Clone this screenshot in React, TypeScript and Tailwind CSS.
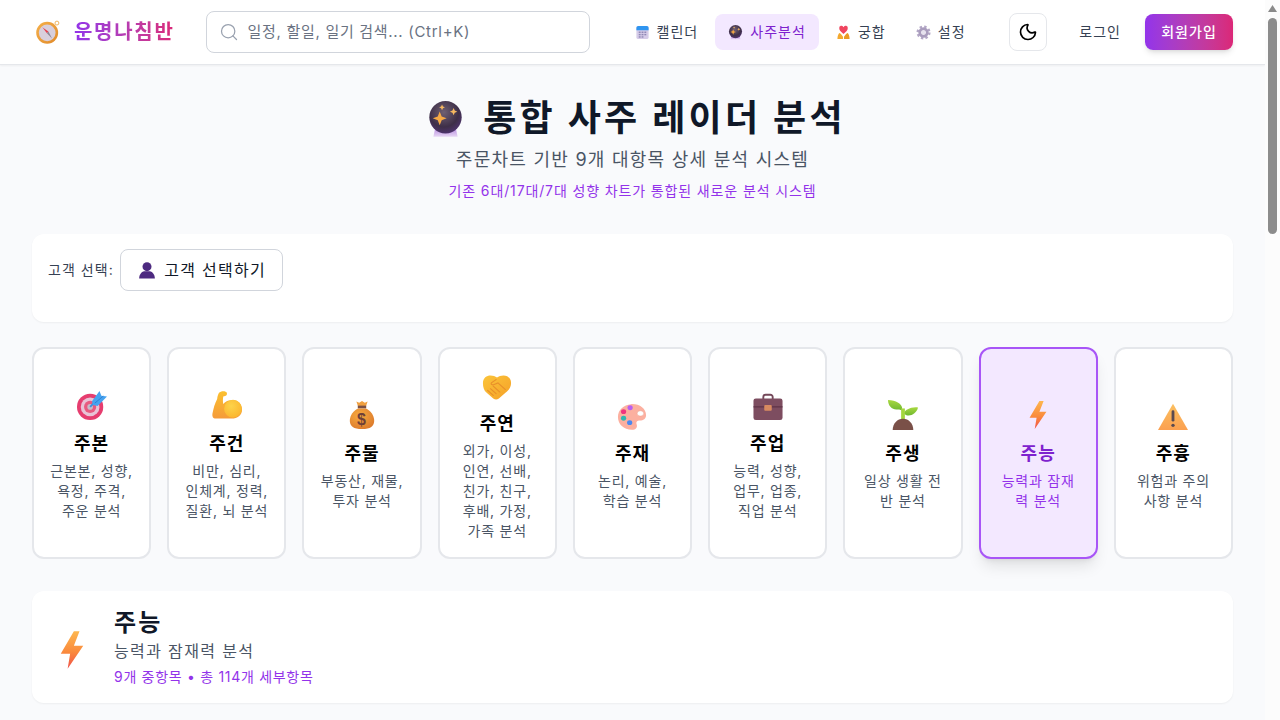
import { Moon, Search } from 'lucide-react'

type IconProps = { className?: string }

function CompassIcon({ className }: IconProps) {
  return (
    <svg viewBox="0 0 32 32" className={className}>
      <defs>
        <linearGradient id="cmp" x1="0" y1="0" x2="1" y2="1">
          <stop offset="0" stopColor="#f5b04a" />
          <stop offset="1" stopColor="#e08a2a" />
        </linearGradient>
      </defs>
      <circle cx="27" cy="5" r="2.4" fill="none" stroke="#eeb25c" strokeWidth="1.2" />
      <circle cx="15" cy="17" r="13.5" fill="url(#cmp)" />
      <circle cx="15" cy="17" r="10.3" fill="#d8cfdc" />
      <path d="M9 10l7.5 5.5-1.8 2z" fill="#e5404f" />
      <path d="M21 24l-6.3-6.5 1.8-2z" fill="#8b8494" />
    </svg>
  )
}

function CalendarIcon({ className }: IconProps) {
  return (
    <svg viewBox="0 0 32 32" className={className}>
      <rect x="3" y="2" width="26" height="28" rx="4" fill="#d5cbe8" />
      <path d="M3 11V6a4 4 0 014-4h18a4 4 0 014 4v5z" fill="#2f95f0" />
      <g fill="#8f88b5">
        <rect x="8" y="14" width="4" height="3" />
        <rect x="14" y="14" width="4" height="3" />
        <rect x="20" y="14" width="4" height="3" />
        <rect x="8" y="19" width="4" height="3" />
        <rect x="14" y="19" width="4" height="3" />
        <rect x="20" y="19" width="4" height="3" />
        <rect x="8" y="24" width="4" height="3" />
        <rect x="14" y="24" width="4" height="3" />
      </g>
    </svg>
  )
}

function CrystalBallIcon({ className, id }: IconProps & { id: string }) {
  return (
    <svg viewBox="0 0 32 32" className={className}>
      <defs>
        <radialGradient id={id} cx="0.45" cy="0.35" r="0.75">
          <stop offset="0" stopColor="#6f6072" />
          <stop offset="0.6" stopColor="#3e2f48" />
          <stop offset="1" stopColor="#54357c" />
        </radialGradient>
        <linearGradient id={`${id}b`} x1="0" y1="0" x2="0" y2="1">
          <stop offset="0" stopColor="#b98fe0" />
          <stop offset="1" stopColor="#e8d8f5" />
        </linearGradient>
      </defs>
      <path d="M7 24h18l1.500 7h-21z" fill={`url(#${id}b)`} />
      <circle cx="16" cy="14" r="14" fill={`url(#${id})`} />
      <path d="M11 9l1.700 4.300L17 15l-4.300 1.700L11 21l-1.700-4.300L5 15l4.300-1.700z" fill="#f6a945" />
      <path d="M13 3l.8 1.700 1.700.8-1.700.8-.8 1.700-.8-1.700-1.700-.8 1.700-.8z" fill="#f6b860" />
      <path d="M23 6l1 2.200 2.200 1-2.200 1-1 2.200-1-2.200-2.200-1 2.200-1z" fill="#f6b860" />
    </svg>
  )
}

function CoupleIcon({ className }: IconProps) {
  return (
    <svg viewBox="0 0 32 32" className={className}>
      <path d="M16 19C10 14 7 11 7 7.500A4.500 4.500 0 0116 5a4.500 4.500 0 019 2.500C25 11 22 14 16 19z" fill="#f0455f" />
      <path d="M15 30H3c0-6 2-11 4-13 3 1 6 5 8 8z" fill="#f4a92f" />
      <path d="M17 30h12c0-6-2-11-4-13-3 1-6 5-8 8z" fill="#eb9a25" />
    </svg>
  )
}

function GearIcon({ className }: IconProps) {
  return (
    <svg viewBox="0 0 32 32" className={className}>
      <circle cx="16" cy="16" r="12.500" fill="none" stroke="#b3a7c6" strokeWidth="5" strokeDasharray="5 4.820" />
      <circle cx="16" cy="16" r="8" fill="none" stroke="#a99cbd" strokeWidth="6" />
      <circle cx="16" cy="16" r="4.500" fill="#e6e1ee" />
    </svg>
  )
}

function TargetIcon({ className }: IconProps) {
  return (
    <svg viewBox="0 0 32 32" className={className}>
      <circle cx="14" cy="18" r="14" fill="#e63d6f" />
      <circle cx="14" cy="18" r="10" fill="#e8c3d6" />
      <circle cx="14" cy="18" r="6.500" fill="#e85a80" />
      <circle cx="14" cy="18" r="3" fill="#c8bcc8" />
      <path d="M14 18L24 7.500" stroke="#3d8fe0" strokeWidth="2" />
      <path d="M16 12l8-11 2 5 6 1-10 10-5-1z" fill="#46a3f0" />
      <path d="M19 14l9-7.500" stroke="#2f7fd0" strokeWidth="1" />
    </svg>
  )
}

function BicepIcon({ className }: IconProps) {
  return (
    <svg viewBox="0 0 32 32" className={className}>
      <defs>
        <linearGradient id="bcp" x1="0" y1="0" x2="0" y2="1">
          <stop offset="0" stopColor="#fbc02f" />
          <stop offset="1" stopColor="#f59b3a" />
        </linearGradient>
        <radialGradient id="bcm" cx="0.4" cy="0.35" r="0.7">
          <stop offset="0" stopColor="#fdd34a" />
          <stop offset="1" stopColor="#fbb52e" />
        </radialGradient>
      </defs>
      <path d="M7.500 3C9 1 14 .5 15.500 2.500 16.500 4 16 6 14 6.500L12 7c-.5 3-.5 5 0 8 2-2.500 5-4 8-4 6-1.500 12 3 12 10 0 6-5 9.500-11 9.500H4C1 30.500 0 28 .5 25c1-5 2.500-11 5-15.500C5.800 7 6.500 4.500 7.500 3z" fill="url(#bcp)" />
      <circle cx="22.400" cy="20" r="9.500" fill="url(#bcm)" />
    </svg>
  )
}

function MoneyBagIcon({ className }: IconProps) {
  return (
    <svg viewBox="0 0 32 32" className={className}>
      <defs>
        <radialGradient id="bag" cx="0.4" cy="0.35" r="0.8">
          <stop offset="0" stopColor="#f9ac3f" />
          <stop offset="1" stopColor="#d8742a" />
        </radialGradient>
      </defs>
      <path d="M10 1.500l3 1.500 3-2 3 2 3-1.500-2 6h-8z" fill="#f0a040" />
      <rect x="11.500" y="6" width="9" height="3" fill="#7a5045" />
      <path d="M12 9h8c5 2 9 7.500 9 13 0 5.500-4 9-13 9S3 27.500 3 22c0-5.500 4-11 9-13z" fill="url(#bag)" />
      <text x="16" y="27" textAnchor="middle" fontSize="17" fontWeight="700" fill="#6e4038" fontFamily="Liberation Sans, sans-serif">$</text>
    </svg>
  )
}

function HandshakeIcon({ className }: IconProps) {
  return (
    <svg viewBox="0 0 32 32" className={className}>
      <defs>
        <linearGradient id="hnd" x1="0" y1="0" x2="1" y2="1">
          <stop offset="0" stopColor="#fbc53a" />
          <stop offset="1" stopColor="#f5a028" />
        </linearGradient>
      </defs>
      <g transform="translate(0 5) scale(1 0.88)">
        <path d="M1 10C1 4 5 1 9 1c3 0 5 1 7 2.500C18 2 20 1 23 1c4 0 8 3 8 9 0 6-3 9-6 12l-7 7c-2 1.500-4 1.500-6 0l-7-7C2 19 1 15 1 10z" fill="url(#hnd)" />
        <path d="M15 6l-5 4c-1 1.500 1 3 3 2l4-2 8 8M9 17l6 6M12 14l7 7M6 19l6 6" fill="none" stroke="#e8902a" strokeWidth="1.300" strokeLinecap="round" />
      </g>
    </svg>
  )
}

function PaletteIcon({ className }: IconProps) {
  return (
    <svg viewBox="0 0 32 32" className={className}>
      <g transform="translate(0 3) scale(1 0.94)">
        <path d="M15 1.500C24 1 31 6.500 31 14c0 4-3 6-6.500 6-3 0-4.500 1.500-3.500 4.500 1 3.500-1 6-5 6C7 30.500 1 24 1 16 1 8 7 2 15 1.500z" fill="#fcb0a0" />
        <ellipse cx="25" cy="12" rx="3.500" ry="3" fill="#fff" stroke="#e89888" strokeWidth="0.500" />
        <circle cx="14" cy="5.500" r="2.800" fill="#b95ff0" />
        <circle cx="7" cy="10" r="2.800" fill="#f0347e" />
        <circle cx="7" cy="17.500" r="2.800" fill="#2fb8b0" />
        <circle cx="13.500" cy="22.500" r="2.800" fill="#4a88f0" />
      </g>
    </svg>
  )
}

function BriefcaseIcon({ className }: IconProps) {
  return (
    <svg viewBox="0 0 32 32" className={className}>
      <path d="M11 11V7.500A2.500 2.500 0 0113.500 5h5A2.500 2.500 0 0121 7.500V11" fill="none" stroke="#74485a" strokeWidth="2" />
      <rect x="0.500" y="9" width="31" height="23" rx="2.500" fill="#7d4d60" />
      <path d="M.5 18h31" stroke="#5c3045" strokeWidth="1.200" />
      <rect x="12" y="16" width="8" height="6" rx="1" fill="#d88a60" />
    </svg>
  )
}

function SeedlingIcon({ className }: IconProps) {
  return (
    <svg viewBox="0 0 32 32" className={className}>
      <defs>
        <linearGradient id="sdl" x1="0" y1="0" x2="0" y2="1">
          <stop offset="0" stopColor="#a8d840" />
          <stop offset="1" stopColor="#70b830" />
        </linearGradient>
      </defs>
      <path d="M15 8C14 4 9 .5 0 0c0 6 4 10 9 10 2 0 4 0 6 1z" fill="url(#sdl)" />
      <path d="M17 14c1-3 7-7 15-6-1 5-6 8.500-10 8.500-2 0-4-1-5-2.500z" fill="url(#sdl)" />
      <path d="M14 9h4v13h-4z" fill="#a4d63f" />
      <path d="M5 32c0-7 5-12 11-12s11 5 11 12z" fill="#7a5048" />
    </svg>
  )
}

function ZapIcon({ className, id }: IconProps & { id: string }) {
  return (
    <svg viewBox="0 0 32 32" className={className}>
      <defs>
        <linearGradient id={id} x1="0" y1="0" x2="0" y2="1">
          <stop offset="0" stopColor="#fdb750" />
          <stop offset="0.55" stopColor="#fa8a3c" />
          <stop offset="1" stopColor="#f0504a" />
        </linearGradient>
      </defs>
      <path d="M17.500 1L7 19h7.500L12.500 31 25 12.500h-7.500L22 1z" fill={`url(#${id})`} />
    </svg>
  )
}

function WarningIcon({ className }: IconProps) {
  return (
    <svg viewBox="0 0 32 32" className={className}>
      <defs>
        <linearGradient id="wrn" x1="0" y1="0" x2="0" y2="1">
          <stop offset="0" stopColor="#fbc060" />
          <stop offset="1" stopColor="#fba050" />
        </linearGradient>
      </defs>
      <path d="M16 4L32 32H0z" fill="url(#wrn)" />
      <rect x="14.500" y="11" width="3" height="12" rx="1.500" fill="#5a4a50" />
      <circle cx="16" cy="27" r="1.800" fill="#5a4a50" />
    </svg>
  )
}

function PersonIcon({ className }: IconProps) {
  return (
    <svg viewBox="0 0 32 32" className={className}>
      <circle cx="16" cy="10" r="8" fill="#4d2a80" />
      <path d="M2 31c0-7 4-12 9-13h10c5 1 9 6 9 13z" fill="#4d2a80" />
    </svg>
  )
}

const navItems = [
  { label: '캘린더', icon: CalendarIcon, active: false },
  { label: '사주분석', icon: (p: IconProps) => <CrystalBallIcon {...p} id="navball" />, active: true },
  { label: '궁합', icon: CoupleIcon, active: false },
  { label: '설정', icon: GearIcon, active: false },
]

const categories = [
  { title: '주본', lines: ['근본본, 성향,', '욕정, 주격,', '주운 분석'], icon: TargetIcon },
  { title: '주건', lines: ['비만, 심리,', '인체계, 정력,', '질환, 뇌 분석'], icon: BicepIcon },
  { title: '주물', lines: ['부동산, 재물,', '투자 분석'], icon: MoneyBagIcon },
  { title: '주연', lines: ['외가, 이성,', '인연, 선배,', '친가, 친구,', '후배, 가정,', '가족 분석'], icon: HandshakeIcon },
  { title: '주재', lines: ['논리, 예술,', '학습 분석'], icon: PaletteIcon },
  { title: '주업', lines: ['능력, 성향,', '업무, 업종,', '직업 분석'], icon: BriefcaseIcon },
  { title: '주생', lines: ['일상 생활 전', '반 분석'], icon: SeedlingIcon },
  { title: '주능', lines: ['능력과 잠재', '력 분석'], icon: (p: IconProps) => <ZapIcon {...p} id="cardzap" />, active: true },
  { title: '주흉', lines: ['위험과 주의', '사항 분석'], icon: WarningIcon },
]

export default function App() {
  return (
    <div className="flex h-screen overflow-hidden bg-[#f9fafc] font-['Inter','Noto_Sans_CJK_KR',sans-serif] tracking-[0.065em]">
      <div className="min-w-0 flex-1">
        {/* Header */}
        <header className="flex h-[65px] items-center border-b border-gray-200 bg-white px-8 shadow-[0_1px_2px_0_rgba(0,0,0,0.05)]">
          <div className="flex items-center gap-[13px]">
            <CompassIcon className="ml-[3px] h-[26px] w-[26px]" />
            <span className="bg-gradient-to-r from-[#9333ea] to-[#db2777] bg-clip-text text-xl font-bold tracking-[0.085em] text-transparent">
              운명나침반
            </span>
          </div>
          <div className="ml-[31px] flex h-[42px] w-[384px] items-center rounded-lg border border-gray-300 bg-white pl-3">
            <Search className="h-5 w-5 text-gray-400" strokeWidth={1.5} />
            <span className="ml-[9px] text-[15px] tracking-[0.7px] text-gray-500">일정, 할일, 일기 검색... (Ctrl+K)</span>
          </div>
          <nav className="ml-[32px] flex items-center gap-1">
            {navItems.map((item) => (
              <div
                key={item.label}
                className={
                  item.active
                    ? 'flex h-9 items-center gap-[7px] rounded-lg bg-[#f3e8ff] px-[13px] text-sm text-[#7e22ce]'
                    : 'flex h-9 items-center gap-[7px] rounded-lg px-[13px] text-sm text-gray-700'
                }
              >
                <item.icon className="h-[15px] w-[15px]" />
                {item.label}
              </div>
            ))}
          </nav>
          <div className="ml-auto flex items-center">
            <div className="flex h-[38px] w-[38px] items-center justify-center rounded-lg border border-gray-200 bg-white">
              <Moon className="h-5 w-5 text-black" strokeWidth={2} />
            </div>
            <span className="ml-8 text-sm text-gray-700">로그인</span>
            <div className="ml-6 flex h-9 w-[88px] items-center justify-center rounded-lg bg-gradient-to-r from-[#9333ea] to-[#db2777] text-sm font-medium text-white shadow-md">
              회원가입
            </div>
          </div>
        </header>

        <main className="px-8 pt-[33px]">
          {/* Title */}
          <div className="text-center">
            <h1 className="flex h-10 items-center justify-center gap-[19px] pl-[8px] text-4xl font-bold tracking-[0.09em] text-gray-900">
              <CrystalBallIcon id="titleball" className="mt-[3px] h-[37px] w-[37px]" />
              통합 사주 레이더 분석
            </h1>
            <p className="mt-[8px] text-lg leading-7 tracking-[0.07em] text-gray-600">주문차트 기반 9개 대항목 상세 분석 시스템</p>
            <p className="mt-[7px] text-sm leading-5 tracking-[0.062em] text-[#9333ea]">기존 6대/17대/7대 성향 차트가 통합된 새로운 분석 시스템</p>
          </div>

          {/* Customer */}
          <section className="mt-[33px] rounded-xl bg-white px-4 pb-[31px] pt-[15px] shadow-[0_1px_2px_0_rgba(0,0,0,0.05)]">
            <div className="flex items-center gap-[6px]">
              <span className="text-sm text-gray-700">고객 선택:</span>
              <div className="flex h-[42px] w-[163px] items-center justify-center gap-2 rounded-lg border border-gray-300 bg-white pl-[2px] text-base tracking-[0.08em] text-gray-900">
                <PersonIcon className="h-[18px] w-[18px]" />
                고객 선택하기
              </div>
            </div>
          </section>

          {/* Categories */}
          <section className="mt-[25px] grid h-[212px] grid-cols-9 gap-4">
            {categories.map((c) => (
              <div
                key={c.title}
                className={
                  c.active
                    ? 'flex flex-col items-center justify-center rounded-xl border-2 border-[#a855f7] bg-[#f3e8ff] p-4 text-center shadow-lg'
                    : 'flex flex-col items-center justify-center rounded-xl border-2 border-gray-200 bg-white p-4 text-center'
                }
              >
                <div className="h-[45px] pt-[5px]">
                  <c.icon className="h-[30px] w-[30px]" />
                </div>
                <div className={c.active ? 'text-lg font-bold leading-7 text-[#7e22ce]' : 'text-lg font-bold leading-7 text-black'}>
                  {c.title}
                </div>
                <div className={c.active ? 'mt-[3px] text-sm leading-5 tracking-[0.055em] text-[#9333ea]' : 'mt-[3px] text-sm leading-5 tracking-[0.055em] text-gray-600'}>
                  {c.lines.map((line) => (
                    <p key={line} className="whitespace-nowrap">{line}</p>
                  ))}
                </div>
              </div>
            ))}
          </section>

          {/* Selected detail */}
          <section className="mt-8 flex items-center gap-[22px] rounded-xl bg-white p-4 shadow-[0_1px_2px_0_rgba(0,0,0,0.05)]">
            <ZapIcon id="detailzap" className="ml-1 mt-[5px] h-10 w-10" />
            <div>
              <h2 className="text-2xl font-bold leading-8 tracking-[0.09em] text-gray-900">주능</h2>
              <p className="text-base leading-6 tracking-[0.085em] text-gray-600">능력과 잠재력 분석</p>
              <p className="mt-1 text-sm leading-5 tracking-[0.05em] text-[#9333ea]">9개 중항목 • 총 114개 세부항목</p>
            </div>
          </section>
        </main>
      </div>

      {/* Scrollbar */}
      <aside className="flex w-[15px] shrink-0 flex-col items-center bg-[#fcfcfc] pt-[5px]">
        <svg viewBox="0 0 9 7" className="h-[7px] w-[9px]">
          <path d="M4.500 0L9 7H0z" fill="#8a8a8a" />
        </svg>
        <div className="mt-[6px] h-[216px] w-[9px] rounded-full bg-[#8c8c8c]" />
      </aside>
    </div>
  )
}
